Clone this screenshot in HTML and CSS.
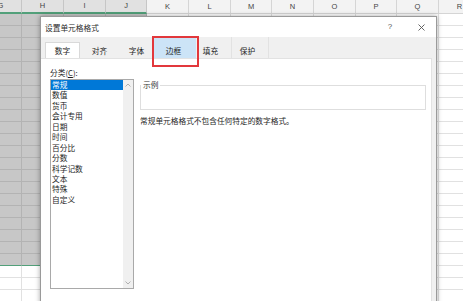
FILE: index.html
```html
<!DOCTYPE html>
<html lang="zh-CN">
<head>
<meta charset="utf-8">
<title>设置单元格格式</title>
<link rel="stylesheet" href="styles.css">
</head>
<body>
<div class="sheet">
  <div class="col sel"><div class="colhead">G</div><div class="selcells"></div><div class="cells"></div></div>
  <div class="col sel"><div class="colhead">H</div><div class="selcells"></div><div class="cells"></div></div>
  <div class="col sel"><div class="colhead">I</div><div class="selcells"></div><div class="cells"></div></div>
  <div class="col sel n"><div class="colhead">J</div><div class="selcells"></div><div class="cells"></div></div>
  <div class="col"><div class="colhead">K</div><div class="cells"></div></div>
  <div class="col"><div class="colhead">L</div><div class="cells"></div></div>
  <div class="col n"><div class="colhead">M</div><div class="cells"></div></div>
  <div class="col"><div class="colhead">N</div><div class="cells"></div></div>
  <div class="col"><div class="colhead">O</div><div class="cells"></div></div>
  <div class="col n"><div class="colhead">P</div><div class="cells"></div></div>
  <div class="col"><div class="colhead">Q</div><div class="cells"></div></div>
  <div class="col"><div class="colhead">R</div><div class="cells"></div></div>
</div>

<div class="dialog">
  <div class="titlebar">
    <span class="title">设置单元格格式</span>
    <span class="tbtn help">?</span>
    <span class="tbtn close"><svg width="7" height="7" viewBox="0 0 7 7"><path d="M0.5 0.5L6.5 6.5M6.5 0.5L0.5 6.5" stroke="#555" stroke-width="0.9" fill="none"/></svg></span>
  </div>
  <div class="tabstrip">
    <div class="tab active">数字</div>
    <div class="tab">对齐</div>
    <div class="tab">字体</div>
    <div class="tab hover"><span class="tabtext">边框</span></div>
    <div class="tab sep">填充</div>
    <div class="tab sep">保护</div>
  </div>
  <div class="panel">
    <div class="catcol">
      <div class="label">分类(<u>C</u>):</div>
      <div class="listbox">
        <div class="items">
          <div class="item selected">常规</div>
          <div class="item">数值</div>
          <div class="item">货币</div>
          <div class="item">会计专用</div>
          <div class="item">日期</div>
          <div class="item">时间</div>
          <div class="item">百分比</div>
          <div class="item">分数</div>
          <div class="item">科学记数</div>
          <div class="item">文本</div>
          <div class="item">特殊</div>
          <div class="item">自定义</div>
        </div>
        <div class="scroll">
          <svg width="6" height="4" viewBox="0 0 6 4"><path d="M0.5 3.5L3 1L5.5 3.5" stroke="#a8a8a8" stroke-width="0.9" fill="none"/></svg>
          <svg width="6" height="4" viewBox="0 0 6 4"><path d="M0.5 0.5L3 3L5.5 0.5" stroke="#a8a8a8" stroke-width="0.9" fill="none"/></svg>
        </div>
      </div>
    </div>
    <div class="detail">
      <fieldset class="example">
        <legend>示例</legend>
        <div class="sample"></div>
      </fieldset>
      <div class="desc">常规单元格格式不包含任何特定的数字格式。</div>
    </div>
  </div>
  <div class="mark"></div>
</div>
</body>
</html>
```

FILE: styles.css
```css
* { box-sizing: border-box; }
html, body { margin: 0; padding: 0; }
body {
  width: 463px;
  height: 301px;
  overflow: hidden;
  position: relative;
  background: #fff;
  font-family: "Noto Sans CJK SC", "Noto Sans", sans-serif;
}

/* spreadsheet */
.sheet { display: flex; margin-left: -20px; height: 301px; }
.col { flex: none; width: 42px; display: flex; flex-direction: column; }
.col.n { width: 41px; }
.colhead {
  flex: none;
  height: 14px;
  background: #f3f3f3;
  border-right: 1px solid #d5d5d5;
  border-bottom: 1px solid #d5d5d5;
  font: 7.5px/13px "Liberation Sans", Arial, sans-serif;
  color: #444;
  text-align: center;
}
.col.sel .colhead {
  background: #e1e1e1;
  border-right-color: #c6c6c6;
  border-bottom: 2px solid #52a07a;
  line-height: 12px;
}
.selcells {
  flex: none;
  height: 252px;
  background: repeating-linear-gradient(to bottom, #c7c7c7 0 11px, #b3b3b3 11px 12px);
  border-right: 1px solid #b3b3b3;
  border-bottom: 1px solid #52a07a;
}
.cells {
  flex: 1;
  background: repeating-linear-gradient(to bottom, #fff 0 11px, #e1e1e1 11px 12px);
  border-right: 1px solid #e1e1e1;
}

/* dialog */
.dialog {
  position: absolute;
  left: 40px;
  top: 16px;
  width: 397px;
  height: 300px;
  border: 1px solid #9a9a9a;
  background: #f0f0f0;
  box-shadow: 0 0 5px rgba(0, 0, 0, 0.35);
  display: flex;
  flex-direction: column;
  font-size: 7.7px;
  color: #1e1e1e;
}
.titlebar {
  flex: none;
  height: 20px;
  background: #fff;
  display: flex;
  align-items: center;
  padding: 0 5px 0 4px;
}
.title { flex: 1; color: #2b2b2b; }
.tbtn { width: 20px; display: flex; justify-content: center; align-items: center; color: #555; }
.help { margin-right: 11px; font: 8px/10px "Liberation Sans", Arial, sans-serif; }

.tabstrip {
  flex: none;
  height: 21px;
  display: flex;
  align-items: flex-end;
  padding-left: 3px;
}
.tab {
  position: relative;
  width: 37px;
  height: 21px;
  padding-top: 9px;
  line-height: 10px;
  text-align: center;
}
.tab.active {
  width: 35px;
  margin: 0 1px;
  height: 16px;
  padding-top: 3px;
  background: #fff;
  border: 1px solid #d9d9d9;
  border-bottom: none;
}
.tab.hover::before {
  content: "";
  position: absolute;
  left: -1px;
  right: -4px;
  top: 0;
  bottom: 0;
  background: #cce4f7;
}
.tabtext { position: relative; }
.tab.sep::after {
  content: "";
  position: absolute;
  right: -3px;
  top: 0;
  bottom: 0;
  width: 1px;
  background: #e2e2e2;
}

.panel {
  flex: 1;
  margin-right: 4px;
  background: #fff;
  border-top: 1px solid #e2e2e2;
  border-right: 1px solid #e2e2e2;
  display: flex;
  gap: 6px;
  padding: 9px 5px 0 9px;
}
.catcol { width: 84px; flex: none; display: flex; flex-direction: column; }
.label { line-height: 9px; height: 9px; }
.listbox {
  margin-top: 2px;
  height: 210px;
  border: 1px solid #a9a9a9;
  display: flex;
  background: #fff;
}
.items { flex: 1; }
.item {
  height: 10.45px;
  line-height: 10.45px;
  padding-left: 1px;
  white-space: nowrap;
}
.item.selected { background: #0078d7; color: #fff; }
.scroll {
  width: 10px;
  flex: none;
  background: #f0f0f0;
  display: flex;
  flex-direction: column;
  justify-content: space-between;
  align-items: center;
  padding: 3px 0;
}
.scroll svg { display: block; }

.detail { flex: 1; padding-top: 12px; }
.example {
  margin: 0;
  padding: 0;
  border: 1px solid #dedede;
  min-width: 0;
}
.example legend {
  padding: 0 2px;
  margin: 0;
  line-height: 10px;
  color: #333;
}
.sample { height: 19px; }
.desc { margin-top: 6px; line-height: 10px; white-space: nowrap; }

.mark {
  position: absolute;
  left: 111px;
  top: 19px;
  width: 47px;
  height: 31px;
  border: 2px solid #e2383c;
}
```
